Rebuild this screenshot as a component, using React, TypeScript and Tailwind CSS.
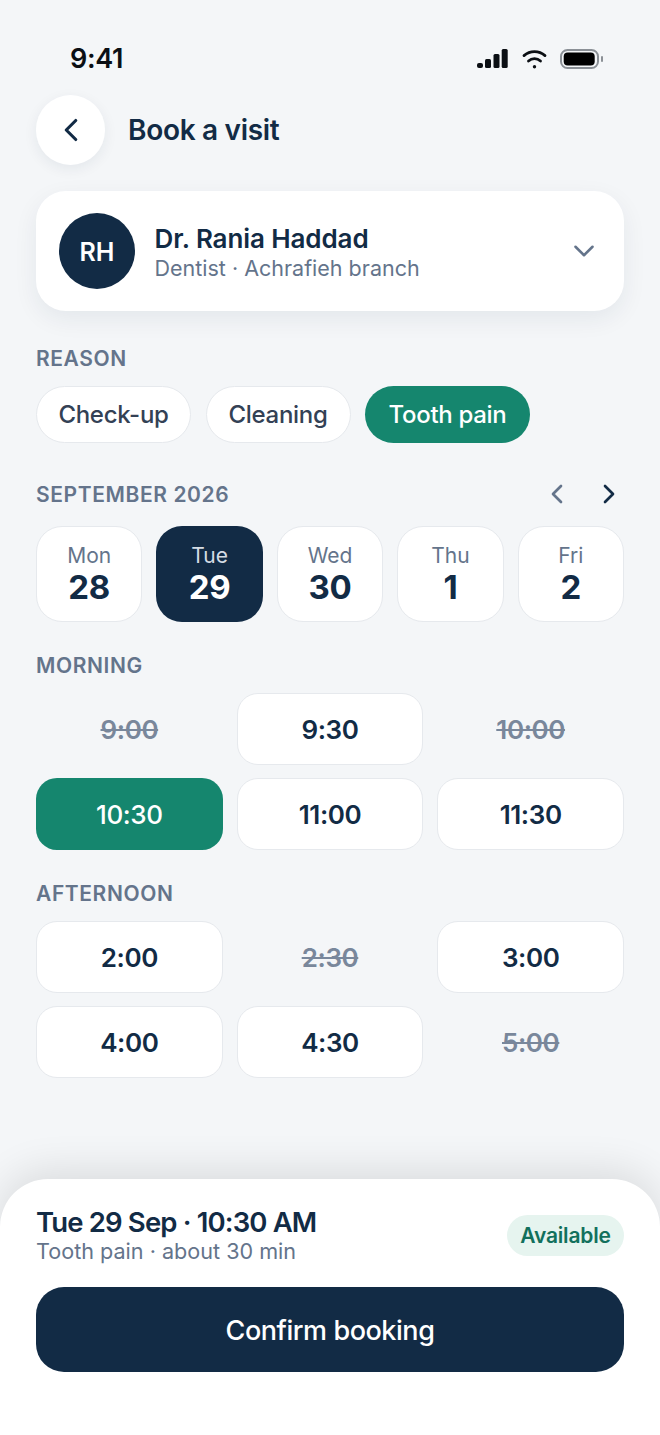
import { ChevronLeft, ChevronRight, ChevronDown } from 'lucide-react'

const REASONS = [
  { label: 'Check-up', width: 'w-[155px]' },
  { label: 'Cleaning', width: 'w-[145px]' },
  { label: 'Tooth pain', width: 'w-[165px]', active: true },
]

const DAYS = [
  { name: 'Mon', num: '28' },
  { name: 'Tue', num: '29', active: true },
  { name: 'Wed', num: '30' },
  { name: 'Thu', num: '1' },
  { name: 'Fri', num: '2' },
]

type Slot = { time: string; off?: boolean; active?: boolean }

const MORNING: Slot[] = [
  { time: '9:00', off: true },
  { time: '9:30' },
  { time: '10:00', off: true },
  { time: '10:30', active: true },
  { time: '11:00' },
  { time: '11:30' },
]

const AFTERNOON: Slot[] = [
  { time: '2:00' },
  { time: '2:30', off: true },
  { time: '3:00' },
  { time: '4:00' },
  { time: '4:30' },
  { time: '5:00', off: true },
]

function SectionLabel({ children }: { children: React.ReactNode }) {
  return <div className="text-[21px] leading-[26px] font-semibold tracking-[0.6px] text-[#64748b] uppercase">{children}</div>
}

function SlotGrid({ slots }: { slots: Slot[] }) {
  return (
    <div className="grid grid-cols-3 gap-x-[14px] gap-y-[13px]">
      {slots.map((s) => {
        if (s.off) {
          return (
            <div key={s.time} className="flex h-[72px] items-center justify-center text-[26px] font-semibold tracking-[-0.4px] text-[#64748b] opacity-85 line-through">
              {s.time}
            </div>
          )
        }
        return (
          <div
            key={s.time}
            className={
              s.active
                ? 'flex h-[72px] items-center justify-center rounded-[21px] bg-[#15866e] text-[26px] font-medium tracking-[-0.4px] text-white'
                : 'flex h-[72px] items-center justify-center rounded-[21px] border-[1.5px] border-[#e6e9ed] bg-white text-[26px] font-semibold tracking-[-0.4px] text-[#122b45]'
            }
          >
            {s.time}
          </div>
        )
      })}
    </div>
  )
}

export default function App() {
  return (
    <div className="relative flex h-[1435px] w-[660px] flex-col overflow-hidden bg-[#f4f6f8] font-['Inter',sans-serif]">
      {/* Status bar */}
      <div className="flex h-[95px] items-start justify-between pl-[70px] pr-[54px] pt-[40px]">
        <span className="text-[27px] leading-[38px] font-semibold tracking-[-0.3px] text-[#0b0f14]">9:41</span>
        <svg width="129" height="22" viewBox="0 0 129 22" className="mt-[8px]">
          <rect x="0" y="15" width="6" height="5" rx="2" fill="#0b0f14" />
          <rect x="8" y="11" width="6" height="9" rx="1.5" fill="#0b0f14" />
          <rect x="16.500" y="6" width="6" height="14" rx="1.5" fill="#0b0f14" />
          <rect x="24.700" y="1" width="6" height="19" rx="1.5" fill="#0b0f14" />
          <path d="M47 7.600a16 16 0 0 1 21 0" fill="none" stroke="#0b0f14" strokeWidth="2.800" strokeLinecap="round" />
          <path d="M51.500 13a9 9 0 0 1 12 0" fill="none" stroke="#0b0f14" strokeWidth="2.800" strokeLinecap="round" />
          <circle cx="57.500" cy="18.700" r="1.700" fill="#0b0f14" />
          <rect x="84" y="2" width="37" height="18" rx="6.500" fill="none" stroke="#8b9096" strokeWidth="2" />
          <rect x="86.700" y="4.500" width="31" height="13" rx="4" fill="#000" />
          <rect x="124" y="8" width="2" height="6" rx="1" fill="#8b9096" />
        </svg>
      </div>

      {/* Header */}
      <div className="flex items-center gap-[23px] px-[36px]">
        <div className="flex h-[70px] w-[69px] items-center justify-center rounded-full bg-white shadow-[0_4px_14px_rgba(18,43,69,0.07)]">
          <ChevronLeft size={38} strokeWidth={2} className="text-[#122b45]" />
        </div>
        <h1 className="text-[28px] font-semibold tracking-[-0.3px] text-[#122b45]">Book a visit</h1>
      </div>

      {/* Doctor card */}
      <div className="mx-[36px] mt-[26px] flex h-[120px] items-center rounded-[30px] bg-white pl-[23px] pr-[23px] shadow-[0_8px_24px_rgba(18,43,69,0.07)]">
        <div className="flex h-[76px] w-[76px] items-center justify-center rounded-full bg-[#122b45] pt-[4px] text-[25px] font-semibold text-white">RH</div>
        <div className="ml-[19.5px] flex-1 pt-[3px]">
          <div className="text-[26px] leading-[31px] font-semibold tracking-[-0.1px] text-[#122b45]">Dr. Rania Haddad</div>
          <div className="text-[21.5px] leading-[28px] text-[#64748b]">Dentist · Achrafieh branch</div>
        </div>
        <ChevronDown size={34} strokeWidth={1.8} className="text-[#64748b]" />
      </div>

      {/* Reason */}
      <div className="mt-[35px] px-[36px]">
        <SectionLabel>Reason</SectionLabel>
      </div>
      <div className="mt-[14px] flex items-center gap-[14.5px] px-[36px]">
        {REASONS.map((r) => (
          <div
            key={r.label}
            className={
              r.active
                ? `flex h-[57px] items-center justify-center rounded-full bg-[#15866e] pt-[1px] text-[24px] font-medium tracking-[-0.3px] text-white ${r.width}`
                : `flex h-[57px] items-center justify-center rounded-full border-[1.5px] border-[#e6e9ed] bg-white pt-[1px] text-[24px] font-medium tracking-[-0.3px] text-[#334155] ${r.width}`
            }
          >
            {r.label}
          </div>
        ))}
      </div>

      {/* Calendar */}
      <div className="mt-[35px] flex items-center justify-between pl-[36px] pr-[35px]">
        <SectionLabel>September 2026</SectionLabel>
        <div className="mb-[2px] flex items-center gap-[20px]">
          <ChevronLeft size={32} strokeWidth={2} className="text-[#64748b]" />
          <ChevronRight size={32} strokeWidth={2} className="text-[#122b45]" />
        </div>
      </div>
      <div className="mt-[14px] grid grid-cols-5 gap-[14px] px-[36px]">
        {DAYS.map((d) => (
          <div
            key={d.name}
            className={
              d.active
                ? 'flex h-[96px] flex-col items-center justify-center rounded-[26px] bg-[#122b45]'
                : 'flex h-[96px] flex-col items-center justify-center rounded-[26px] border-[1.5px] border-[#e6e9ed] bg-white'
            }
          >
            <span className={d.active ? 'text-[21px] leading-[26px] text-[#d5dce4]' : 'text-[21px] leading-[26px] text-[#64748b]'}>{d.name}</span>
            <span className={d.active ? 'text-[33px] leading-[36px] font-bold tracking-[-0.3px] text-white' : 'text-[33px] leading-[36px] font-bold tracking-[-0.3px] text-[#122b45]'}>{d.num}</span>
          </div>
        ))}
      </div>

      {/* Morning */}
      <div className="mt-[31px] px-[36px]">
        <SectionLabel>Morning</SectionLabel>
      </div>
      <div className="mt-[14px] px-[36px]">
        <SlotGrid slots={MORNING} />
      </div>

      {/* Afternoon */}
      <div className="mt-[31px] px-[36px]">
        <SectionLabel>Afternoon</SectionLabel>
      </div>
      <div className="mt-[14px] px-[36px]">
        <SlotGrid slots={AFTERNOON} />
      </div>

      {/* Bottom sheet */}
      <div className="mt-auto h-[256px] rounded-t-[48px] bg-white px-[36px] pt-[27px] shadow-[0_-8px_40px_rgba(0,0,0,0.11)]">
        <div className="flex items-center justify-between">
          <div>
            <div className="text-[27.5px] leading-[32px] font-semibold tracking-[-0.85px] text-[#122b45]">Tue 29 Sep · 10:30 AM</div>
            <div className="text-[21.6px] leading-[27px] text-[#64748b]">Tooth pain · about 30 min</div>
          </div>
          <div className="flex h-[41px] w-[117px] items-center justify-center rounded-full bg-[#e6f4ef] text-[21px] font-semibold tracking-[-0.2px] text-[#12705c]">Available</div>
        </div>
        <div className="mt-[22px] flex h-[85px] items-center justify-center rounded-[28px] bg-[#122b45] pt-[3px] text-[27px] font-medium tracking-[-0.45px] text-white">Confirm booking</div>
      </div>
    </div>
  )
}
